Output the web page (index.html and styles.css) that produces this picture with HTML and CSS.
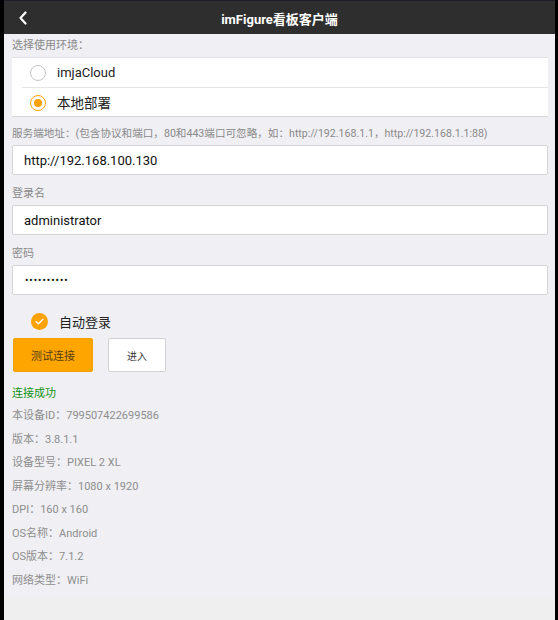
FILE: index.html
```html
<!DOCTYPE html>
<html lang="zh">
<head>
<meta charset="utf-8">
<title>imFigure看板客户端</title>
<link rel="stylesheet" href="styles.css">
</head>
<body>
<div class="app">
  <header class="bar">
    <svg class="back" width="10" height="14" viewBox="0 0 10 14"><path d="M7.5 1.5 L2.5 7 L7.5 12.5" fill="none" stroke="#fff" stroke-width="2.2" stroke-linecap="round" stroke-linejoin="round"/></svg>
    <div class="title">imFigure看板客户端</div>
  </header>
  <main class="content">
    <div class="label first">选择使用环境：</div>
    <div class="card">
      <div class="opt"><span class="radio"></span><span class="opt-text">imjaCloud</span></div>
      <div class="opt sel"><span class="radio on"></span><span class="opt-text">本地部署</span></div>
    </div>
    <div class="label server">服务端地址：(包含协议和端口，80和443端口可忽略，如：http://192.168.1.1，http://192.168.1.1:88)</div>
    <div class="input">http://192.168.100.130</div>
    <div class="label">登录名</div>
    <div class="input">administrator</div>
    <div class="label">密码</div>
    <div class="input pwd">••••••••••</div>
    <div class="check-row">
      <span class="check"><svg width="9" height="7" viewBox="0 0 9 7"><path d="M1 3.6 L3.4 5.8 L8 1.2" fill="none" stroke="#fff" stroke-width="1.3" stroke-linecap="round" stroke-linejoin="round"/></svg></span>
      <span class="check-text">自动登录</span>
    </div>
    <div class="btns">
      <div class="btn primary">测试连接</div>
      <div class="btn">进入</div>
    </div>
    <div class="info ok">连接成功</div>
    <div class="info">本设备ID：799507422699586</div>
    <div class="info">版本：3.8.1.1</div>
    <div class="info">设备型号：PIXEL 2 XL</div>
    <div class="info">屏幕分辨率：1080 x 1920</div>
    <div class="info">DPI：160 x 160</div>
    <div class="info">OS名称：Android</div>
    <div class="info">OS版本：7.1.2</div>
    <div class="info">网络类型：WiFi</div>
  </main>
  <div class="foot"></div>
</div>
</body>
</html>
```
FILE: styles.css
```css
html, body {
  margin: 0;
  padding: 0;
  background: #000;
  height: 620px;
  overflow: hidden;
}
body {
  font-family: Roboto, "Noto Sans CJK SC", sans-serif;
}
.app {
  margin-left: 4px;
  width: 551px;
  height: 620px;
  display: flex;
  flex-direction: column;
  background: #efefef;
  border-top: 1px solid #1c1e2a;
  box-sizing: border-box;
}
.bar {
  height: 33px;
  flex: none;
  background: #2e2e2e;
  display: flex;
  align-items: center;
  color: #fff;
}
.back {
  margin-left: 14px;
  margin-top: 1px;
}
.title {
  flex: 1;
  text-align: center;
  font-size: 13px;
  font-weight: 700;
  padding-right: 24px;
  margin-top: 2px;
}
.content {
  background: #efeff4;
  height: 563px;
  flex: none;
  padding: 0 7px 0 8px;
  box-sizing: border-box;
}
.label {
  font-size: 11px;
  color: #8a8a8a;
  height: 30px;
  line-height: 14px;
  padding-top: 12px;
  box-sizing: border-box;
  white-space: nowrap;
}
.label.server {
  font-size: 10.6px;
}
.label.first {
  height: 23px;
  padding-top: 5px;
}
.card {
  background: #fff;
  border-top: 1px solid #e2e2e4;
  border-bottom: 1px solid #d6d6d8;
  height: 60px;
  box-sizing: border-box;
  margin-bottom: -2px;
}
.opt {
  height: 29px;
  display: flex;
  align-items: center;
  padding-left: 18px;
  margin-left: 10px;
}
.opt + .opt {
  border-top: 1px solid #e6e6e8;
  height: 29px;
  padding-left: 8px;
}
.radio {
  width: 16px;
  height: 16px;
  border: 1px solid #c4c4c4;
  border-radius: 50%;
  box-sizing: border-box;
  margin-left: -10px;
  display: flex;
  align-items: center;
  justify-content: center;
}
.opt + .opt .radio {
  margin-left: 0;
}
.radio.on {
  border: 1.5px solid #ffa200;
}
.radio.on::after {
  content: "";
  width: 8px;
  height: 8px;
  border-radius: 50%;
  background: #ffa200;
}
.opt-text {
  font-size: 13px;
  color: #222;
  margin-left: 11px;
}
.sel .opt-text {
  font-size: 13.5px;
  margin-top: -2px;
}
.input {
  background: #fff;
  border: 1px solid #d4d4d6;
  border-radius: 2px;
  height: 30px;
  box-sizing: border-box;
  padding-left: 11px;
  font-size: 13px;
  color: #111;
  display: flex;
  align-items: center;
}
.input.pwd {
  font-size: 10px;
  letter-spacing: 1px;
  padding-left: 12px;
}
.check-row {
  height: 43px;
  display: flex;
  align-items: center;
  padding-left: 19px;
  padding-top: 10px;
  box-sizing: border-box;
}
.check {
  width: 17px;
  height: 17px;
  border-radius: 50%;
  background: #ffa200;
  display: flex;
  align-items: center;
  justify-content: center;
}
.check-text {
  font-size: 13px;
  color: #222;
  margin-left: 11px;
}
.btns {
  display: flex;
  gap: 15px;
  padding-left: 1px;
}
.btn {
  width: 58px;
  height: 34px;
  box-sizing: border-box;
  border: 1px solid #d2d2d2;
  border-radius: 2px;
  background: #fff;
  font-size: 10px;
  color: #333;
  display: flex;
  align-items: center;
  justify-content: center;
}
.btn.primary {
  width: 80px;
  background: #ffa500;
  border-color: #f0a000;
  color: #5a4010;
  font-size: 11px;
}
.info {
  font-size: 11px;
  color: #8e8e8e;
  height: 23.5px;
  line-height: 23.5px;
}
.info.ok {
  color: #129212;
  margin-top: 11px;
  height: 21px;
  line-height: 21px;
}
.foot {
  flex: 1;
  background: #efefef;
}
```
